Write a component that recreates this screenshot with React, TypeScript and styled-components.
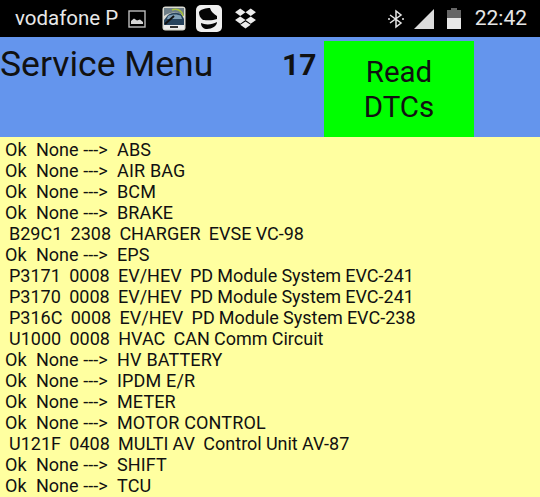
import React from "react";
import styled, { createGlobalStyle } from "styled-components";

const Global = createGlobalStyle`
  html, body { margin: 0; padding: 0; background: #ffffa0; }
  #root { width: 540px; height: 497px; overflow: hidden; }
`;
const Page = styled.div`
  width: 540px; height: 497px; overflow: hidden; display: flex; flex-direction: column;
  font-family: Roboto, "Liberation Sans", sans-serif; color: #111; background: #ffffa0;
`;
const StatusBar = styled.div`
  height: 37px; flex: none; background: #000; color: #e8e8e8; display: flex; align-items: center;
  padding: 0 13px 0 15px; box-sizing: border-box;
`;
const Carrier = styled.span`font-size: 20.5px; line-height: 37px; margin-right: 10px;`;
const IconSlot = styled.span<{ $ml?: number }>`
  display: flex; margin-left: ${p => p.$ml ?? 0}px;
`;
const Clock = styled.span`font-size: 21px; line-height: 37px; margin-left: 14px; color: #e6e6e6;`;
const Spacer = styled.div`flex: 1;`;
const Header = styled.header`
  height: 100px; flex: none; background: #6495ed; display: flex; align-items: stretch;
`;
const Title = styled.h1`
  margin: 0; width: 282px; font-size: 35.5px; font-weight: 400; line-height: 54px; white-space: nowrap; flex: none;
`;
const Count = styled.div`
  width: 42px; flex: none; font-size: 30px; font-weight: 700; line-height: 55px; white-space: nowrap; color: #111;
`;
const ReadButton = styled.button`
  width: 150px; margin: 4px 0 0; padding: 1px 0 0; border: 0; background: #00ff00; color: #111;
  font: 400 29.5px/35px Roboto, "Liberation Sans", sans-serif; flex: none;
`;
const List = styled.main`
  flex: 1; padding: 2px 0 0 0; background: #ffffa0;
`;
const Row = styled.div<{ $dtc?: boolean }>`
  height: 21px; line-height: 21px; font-size: 18px; white-space: pre;
  padding-left: ${p => (p.$dtc ? 9 : 5)}px;
  word-spacing: ${p => (p.$dtc ? -0.3 : 0.25)}px;
`;
const OkName = styled.span`letter-spacing: 0.12px;`;

const rows: { lead: string; name: string; dtc?: boolean }[] = [
  { lead: "Ok  None --->  ", name: "ABS" },
  { lead: "Ok  None --->  ", name: "AIR BAG" },
  { lead: "Ok  None --->  ", name: "BCM" },
  { lead: "Ok  None --->  ", name: "BRAKE" },
  { lead: "B29C1  2308  ", name: "CHARGER  EVSE VC-98", dtc: true },
  { lead: "Ok  None --->  ", name: "EPS" },
  { lead: "P3171  0008  ", name: "EV/HEV  PD Module System EVC-241", dtc: true },
  { lead: "P3170  0008  ", name: "EV/HEV  PD Module System EVC-241", dtc: true },
  { lead: "P316C  0008  ", name: "EV/HEV  PD Module System EVC-238", dtc: true },
  { lead: "U1000  0008  ", name: "HVAC  CAN Comm Circuit", dtc: true },
  { lead: "Ok  None --->  ", name: "HV BATTERY" },
  { lead: "Ok  None --->  ", name: "IPDM E/R" },
  { lead: "Ok  None --->  ", name: "METER" },
  { lead: "Ok  None --->  ", name: "MOTOR CONTROL" },
  { lead: "U121F  0408  ", name: "MULTI AV  Control Unit AV-87", dtc: true },
  { lead: "Ok  None --->  ", name: "SHIFT" },
  { lead: "Ok  None --->  ", name: "TCU" },
];

const ImageIcon = () => (
  <svg width="18" height="18" viewBox="0 0 18 18">
    <rect x="1" y="1" width="16" height="16" fill="none" stroke="#bdbdbd" strokeWidth="1.4" />
    <path d="M3 14 L3 11 L6 8.5 L9 10.5 L12 9.5 L15 12 L15 14 Z" fill="#d5d5d5" />
  </svg>
);
const CarIcon = () => (
  <svg width="24" height="25" viewBox="0 0 24 25">
    <rect x="0.5" y="0.5" width="23" height="24" rx="3" fill="#dcdcd4" />
    <path d="M2 2 H22 V10 C16 5 8 6 2 10 Z" fill="#6f7f88" />
    <path d="M2 14 L6 9 C10 6 17 6 20 9 L22 13 L22 19 L2 19 Z" fill="#27435c" />
    <path d="M6 10 C10 8 16 8 19 10 L20 13 L5 13 Z" fill="#7f9fb6" />
    <path d="M10 4 C14 2 20 4 21 10" fill="none" stroke="#a8c23c" strokeWidth="1.6" />
    <path d="M12 10 L3 18" stroke="#111" strokeWidth="2" />
    <rect x="2" y="19" width="20" height="4" fill="#ececec" />
    <rect x="8" y="20" width="8" height="2" fill="#333" />
  </svg>
);
const SwirlIcon = () => (
  <svg width="26" height="27" viewBox="0 0 26 27">
    <rect x="0" y="0" width="26" height="27" rx="5" fill="#efefef" />
    <path d="M3 7 C5 4 10 3 14 3 C15 7 18 9 21 11 L21 14 C16 16 10 15 7 15 C4 13 3 10 3 7 Z" fill="#050505" />
    <path d="M5 18 C9 20 16 20 21 17 C21 21 16 24 11 24 C8 24 5 22 5 18 Z" fill="#050505" />
  </svg>
);
const DropboxIcon = () => (
  <svg width="23" height="21" viewBox="0 0 22 20" fill="#ececec">
    <path d="M6 0.5 L11 4 L6 7.5 L1 4 Z" />
    <path d="M16 0.5 L21 4 L16 7.5 L11 4 Z" />
    <path d="M6 8 L11 11.5 L6 15 L1 11.5 Z" />
    <path d="M16 8 L21 11.5 L16 15 L11 11.5 Z" />
    <path d="M6 16 L11 12.8 L16 16 L11 19.5 Z" />
  </svg>
);
const BluetoothIcon = () => (
  <svg width="20" height="20" viewBox="0 0 20 20" fill="none" stroke="#e6e6e6" strokeWidth="1.5">
    <path d="M4 6 L15 14 L10 18 L10 2 L15 6 L4 14" />
    <circle cx="3" cy="10" r="1" fill="#e6e6e6" stroke="none" />
    <circle cx="17" cy="10" r="1" fill="#e6e6e6" stroke="none" />
  </svg>
);
const SignalIcon = () => (
  <svg width="20" height="20" viewBox="0 0 20 20">
    <path d="M0 20 L20 0 V20 Z" fill="#dcdcdc" />
  </svg>
);
const BatteryIcon = () => (
  <svg width="14" height="21" viewBox="0 0 14 21">
    <rect x="4" y="0" width="6" height="3" fill="#666" />
    <rect x="0" y="2" width="14" height="8" fill="#666" />
    <rect x="0" y="10" width="14" height="11" fill="#e8e8e8" />
  </svg>
);

export default function App() {
  return (
    <Page>
      <Global />
      <StatusBar>
        <Carrier>vodafone P</Carrier>
        <IconSlot><ImageIcon /></IconSlot>
        <IconSlot $ml={16}><CarIcon /></IconSlot>
        <IconSlot $ml={10}><SwirlIcon /></IconSlot>
        <IconSlot $ml={12}><DropboxIcon /></IconSlot>
        <Spacer />
        <IconSlot><BluetoothIcon /></IconSlot>
        <IconSlot $ml={8}><SignalIcon /></IconSlot>
        <IconSlot $ml={13}><BatteryIcon /></IconSlot>
        <Clock>22:42</Clock>
      </StatusBar>
      <Header>
        <Title>Service Menu</Title>
        <Count>17</Count>
        <ReadButton>Read<br />DTCs</ReadButton>
      </Header>
      <List>
        {rows.map(r => (
          <Row key={r.lead + r.name} $dtc={r.dtc}>
            {r.lead}
            {r.dtc ? r.name : <OkName>{r.name}</OkName>}
          </Row>
        ))}
      </List>
    </Page>
  );
}
